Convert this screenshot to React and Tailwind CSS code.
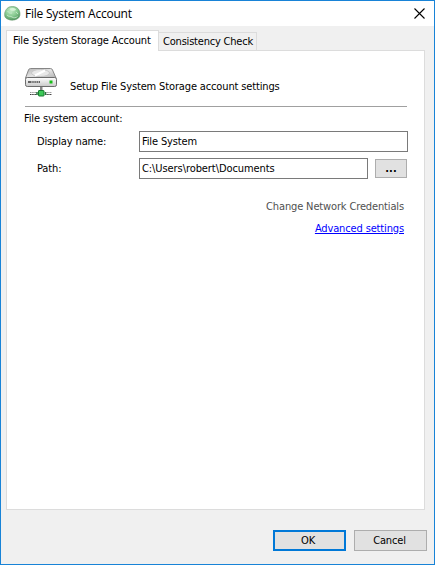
function GlobeIcon() {
  return (
    <svg width="17" height="15" viewBox="0 0 17 15" className="shrink-0">
      <defs>
        <radialGradient id="ball" cx="0.42" cy="0.3" r="0.75">
          <stop offset="0" stopColor="#c3ebc6" />
          <stop offset="0.55" stopColor="#86c98f" />
          <stop offset="1" stopColor="#4b9159" />
        </radialGradient>
      </defs>
      <path d="M5 1C7 .300 10.500 .200 12.500 1.500c2 1 3.500 3.500 3.500 6.500 0 2.500-1 4-3 5-2.500 1.500-6.500 1.500-9 .3C1.500 12.300.600 11 .600 8.500.500 6 2 2.500 5 1Z" fill="url(#ball)" stroke="#6a9a70" strokeWidth=".6" />
      <path d="M5.500 2.700C7 1.500 10.500 1.700 12 3.200c-1 2-5 2.300-6.500-.5Z" fill="#d6f3d8" />
      <path d="M3 9c1.500 2 3.500.8 5 2s4 1 5.500-.5M3.500 5C5 7 6 7.500 8 7M12 6l2 2" fill="none" stroke="#cdeed1" strokeWidth=".8" />
    </svg>
  );
}

function DriveIcon() {
  return (
    <svg width="34" height="31" viewBox="0 0 34 31" className="-mt-px shrink-0">
      <defs>
        <linearGradient id="top" x1="0" y1="0" x2="1" y2="1">
          <stop offset="0" stopColor="#b4b4b4" />
          <stop offset="0.5" stopColor="#e4e4e4" />
          <stop offset="1" stopColor="#b0b0b0" />
        </linearGradient>
        <linearGradient id="front" x1="0" y1="0" x2="0" y2="1">
          <stop offset="0" stopColor="#ffffff" />
          <stop offset="1" stopColor="#c8c8c8" />
        </linearGradient>
      </defs>
      <path d="M6.500 1.500h20q1.500 0 2 1.500L32 11H1.500L4.500 3q.5-1.500 2-1.500Z" fill="url(#top)" stroke="#868686" />
      <ellipse cx="16.500" cy="6" rx="9" ry="3.500" fill="#e8e8e8" stroke="#c0c0c0" strokeWidth=".8" />
      <path d="M11 8.500 21 3.500" stroke="#fff" strokeWidth="2" />
      <rect x="1.500" y="10.500" width="31" height="9" rx="1.800" fill="url(#front)" stroke="#6c6c6c" />
      <path d="M4 15h3.500M8.300 15h1.400M10.400 15h1.400M12.500 15h1.400M14.600 15H16" stroke="#646464" strokeWidth="2" />
      <rect x="25.500" y="13.500" width="3" height="3" fill="#18bd18" />
      <path d="M16 20h2.500v3H16Z" fill="#888" />
      <path d="M6 25.500h7M21 25.500h7" stroke="#999" strokeDasharray="1.500 .7" />
      <path d="M6 27.500h7M21 27.500h7" stroke="#333" strokeDasharray="1.500 .7" />
      <path d="M13 25v3M21.500 25v3" stroke="#27723a" strokeWidth="1.500" />
      <rect x="14.500" y="23.500" width="5.500" height="5.500" rx=".5" fill="#3cc957" stroke="#187b30" />
    </svg>
  );
}

export default function App() {
  return (
    <div className="flex h-[565px] w-[435px] flex-col whitespace-nowrap border border-[#1883d7] bg-[#f0f0f0] font-['DejaVu_Sans_Condensed','Noto_Sans',sans-serif] text-[11px] leading-[14px] tracking-[-0.14px] text-black">
      <header className="flex h-[25px] shrink-0 items-center bg-white pl-[3px] pr-[9px]">
        <GlobeIcon />
        <h1 className="ml-[4px] font-['Open_Sans',sans-serif] text-[12px] leading-4 tracking-[-0.22px]">File System Account</h1>
        <svg width="11" height="11" viewBox="0 0 11 11" className="ml-auto">
          <path d="M.500.500l10 10M10.500.500l-10 10" stroke="#000" strokeWidth="1.100" />
        </svg>
      </header>

      <main className="flex flex-1 flex-col pl-[5px] pr-[6px] pt-1">
        <nav className="z-10 -mb-px flex h-[21px] items-end">
          <div className="h-[21px] w-[153px] border border-b-0 border-[#dcdcdc] bg-white pl-[6px] pt-[3px]">File System Storage Account</div>
          <div className="mb-px h-[18px] w-[98px] border border-b-0 border-l-0 border-[#dcdcdc] pl-[4px] pt-[2px] tracking-[-0.2px]">Consistency Check</div>
        </nav>
        <section className="mr-[3px] h-[460px] w-[419px] border border-[#dcdcdc] bg-white pl-[17px] pt-[17px]">
          <div className="flex h-[30px]">
            <DriveIcon />
            <p className="ml-[12px] pt-[12px]">Setup File System Storage account settings</p>
          </div>
          <div className="ml-px mt-[8px] h-px w-[382px] bg-[#a0a0a0]" />
          <h2 className="mt-[5px]">File system account:</h2>
          <div className="mt-[5px] flex h-[21px] items-center">
            <label className="w-[115px] pl-[13px]">Display name:</label>
            <div className="flex h-[21px] w-[269px] items-center border border-[#7a7a7a] pl-[2px]">File System</div>
          </div>
          <div className="mt-[6px] flex h-[21px] items-center">
            <label className="w-[115px] pl-[13px]">Path:</label>
            <div className="flex h-[21px] w-[229px] items-center border border-[#7a7a7a] pl-[2px] tracking-[-0.08px]">C:\Users\robert\Documents</div>
            <button className="ml-[7px] flex h-[19px] w-[32px] items-center justify-center border border-[#adadad] bg-[#e1e1e1] font-bold tracking-[0px]">...</button>
          </div>
          <div className="mt-[21px] flex w-[380px] flex-col items-end gap-2">
            <span className="text-[#505050]">Change Network Credentials</span>
            <a className="text-[#0000ff] underline">Advanced settings</a>
          </div>
        </section>
        <footer className="mt-[20px] flex justify-end gap-2 pr-px">
          <button className="flex h-[21px] w-[73px] items-center justify-center border-2 border-[#0078d7] bg-[#e1e1e1] pr-[3px] pt-px">OK</button>
          <button className="flex h-[21px] w-[73px] items-center justify-center border border-[#adadad] bg-[#e1e1e1] pr-[2px] pt-px">Cancel</button>
        </footer>
      </main>
    </div>
  );
}
